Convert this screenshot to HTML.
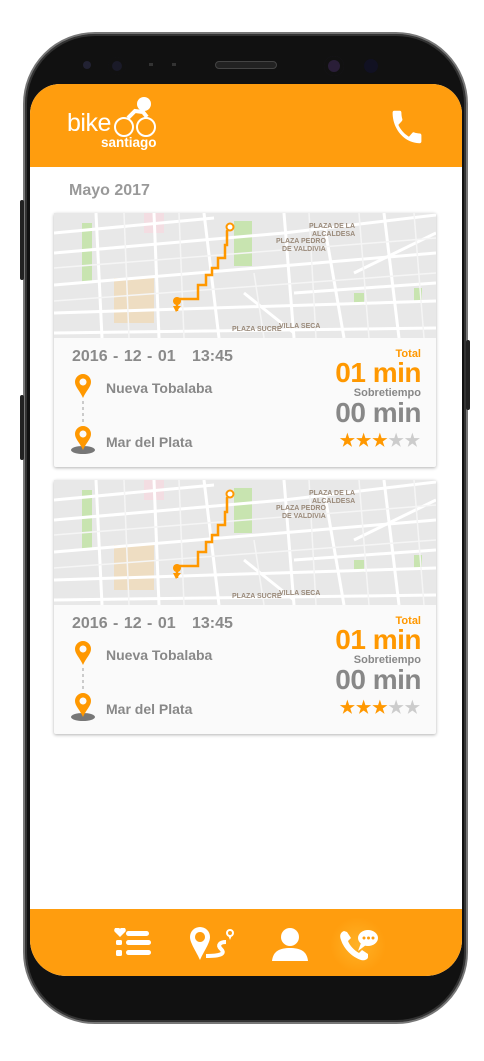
<!DOCTYPE html>
<html><head><meta charset="utf-8"><style>
*{margin:0;padding:0;box-sizing:border-box}
body{width:484px;height:1061px;background:#fff;position:relative;overflow:hidden;font-family:"Liberation Sans",sans-serif}
.phone{position:absolute;left:23px;top:32px;width:445px;height:992px;border-radius:72px;background:#111;border:2px solid #777;box-shadow:inset 0 0 0 2px #333}
.btn{position:absolute;background:#222;width:4px;border-radius:2px}
.screen{position:absolute;left:30px;top:84px;width:432px;height:892px;border-radius:30px 30px 36px 36px;overflow:hidden;background:#fff}
.hdr{height:83px;background:#ff9d0e;position:relative}
.foot{position:absolute;bottom:0;left:0;width:100%;height:67px;background:#ff9d0e}
.month{position:absolute;left:39px;top:98px;font-size:16px;font-weight:bold;color:#999}
.card{position:absolute;left:24px;width:382px;height:254px;background:#fafafa;box-shadow:0 1px 3px rgba(0,0,0,.3);border-radius:2px}
.map{width:382px;height:125px;display:block}
.date{position:absolute;left:18px;top:135px;font-size:16px;font-weight:bold;color:#8a8a8a;word-spacing:1px}
.st{position:absolute;left:52px;font-size:14px;font-weight:bold;color:#888}
.r{position:absolute;right:15px;text-align:right;font-weight:bold}
</style></head><body>
<div class="phone"></div>
<div class="btn" style="left:20px;top:200px;height:80px"></div>
<div class="btn" style="left:20px;top:395px;height:65px"></div>
<div class="btn" style="left:466px;top:340px;height:70px"></div>
<div style="position:absolute;left:83px;top:61px;width:8px;height:8px;border-radius:50%;background:#223"></div>
<div style="position:absolute;left:108px;top:57px;width:18px;height:18px;border-radius:50%;background:#1a1a28;box-shadow:inset 0 0 0 4px #111"></div>
<div style="position:absolute;left:149px;top:63px;width:4px;height:3px;background:#333"></div>
<div style="position:absolute;left:172px;top:63px;width:4px;height:3px;background:#333"></div>
<div style="position:absolute;left:215px;top:61px;width:62px;height:8px;border-radius:4px;background:#222;border:1px solid #444"></div>
<div style="position:absolute;left:324px;top:56px;width:20px;height:20px;border-radius:50%;background:#2a1e38;box-shadow:inset 0 0 0 4px #111"></div>
<div style="position:absolute;left:364px;top:59px;width:14px;height:14px;border-radius:50%;background:#112"></div>

<div class="screen">
 <div class="hdr">
  <div style="position:absolute;left:37px;top:25px;color:#fff;font-size:25px;letter-spacing:-0.5px">bike</div>
  <div style="position:absolute;left:71px;top:51px;color:#fff;font-size:13.5px;font-weight:bold">santiago</div>
  <svg style="position:absolute;left:83px;top:12px" width="45" height="45" viewBox="0 0 45 45" fill="none" stroke="#fff" stroke-width="2">
   <circle cx="31" cy="8" r="7" fill="#fff" stroke="none"/>
   <circle cx="11" cy="31" r="9"/><circle cx="33" cy="31" r="9"/>
   <path d="M15 22 L22 15 L30 16 L34 21" stroke-width="4"/>
  </svg>
  <svg style="position:absolute;left:361px;top:25px" width="32" height="36" viewBox="2 2 20 20" preserveAspectRatio="none"><path fill="#fff" d="M6.6 10.8c1.4 2.8 3.8 5.1 6.6 6.6l2.2-2.2c.3-.3.7-.4 1-.2 1.1.4 2.3.6 3.6.6.6 0 1 .4 1 1V20c0 .6-.4 1-1 1C10.6 21 3 13.4 3 4c0-.6.4-1 1-1h3.5c.6 0 1 .4 1 1 0 1.3.2 2.5.6 3.6.1.3 0 .7-.2 1z"/></svg>
 </div>
 <div class="month" style="top:98px">Mayo 2017</div>

 <div class="card" style="top:129px">
  <svg class="map" viewBox="0 0 382 125"><use href="#mp"/></svg>
  <div class="date">2016 - 12 - 01 &nbsp;&nbsp;13:45</div>
  <svg style="position:absolute;left:16px;top:161px" width="26" height="80" viewBox="0 0 26 80"><use href="#pins"/></svg>
  <div class="st" style="top:167px">Nueva Tobalaba</div>
  <div class="st" style="top:221px">Mar del Plata</div>
  <div class="r" style="top:135px;font-size:11px;color:#ff9800">Total</div>
  <div class="r" style="top:144px;font-size:28px;color:#ff9800;letter-spacing:-0.5px">01 min</div>
  <div class="r" style="top:174px;font-size:11px;color:#888">Sobretiempo</div>
  <div class="r" style="top:184px;font-size:28px;color:#888;letter-spacing:-0.5px">00 min</div>
  <div class="r" style="top:218px;font-size:17px;letter-spacing:1px"><span style="color:#ff9800">★★★</span><span style="color:#ccc">★★</span></div>
 </div>
 <div class="card" style="top:396px">
  <svg class="map" viewBox="0 0 382 125"><use href="#mp"/></svg>
  <div class="date">2016 - 12 - 01 &nbsp;&nbsp;13:45</div>
  <svg style="position:absolute;left:16px;top:161px" width="26" height="80" viewBox="0 0 26 80"><use href="#pins"/></svg>
  <div class="st" style="top:167px">Nueva Tobalaba</div>
  <div class="st" style="top:221px">Mar del Plata</div>
  <div class="r" style="top:135px;font-size:11px;color:#ff9800">Total</div>
  <div class="r" style="top:144px;font-size:28px;color:#ff9800;letter-spacing:-0.5px">01 min</div>
  <div class="r" style="top:174px;font-size:11px;color:#888">Sobretiempo</div>
  <div class="r" style="top:184px;font-size:28px;color:#888;letter-spacing:-0.5px">00 min</div>
  <div class="r" style="top:218px;font-size:17px;letter-spacing:1px"><span style="color:#ff9800">★★★</span><span style="color:#ccc">★★</span></div>
 </div>

 <div class="foot">
  <svg style="position:absolute;left:84px;top:19px" width="38" height="30" viewBox="0 0 38 30" fill="#fff">
   <path d="M6 9 L0.5 3.5 A3 3 0 0 1 6 1 A3 3 0 0 1 11.5 3.5Z"/>
   <rect x="2" y="12" width="6" height="5" rx="1.5"/><rect x="2" y="22" width="6" height="6" rx="1.5"/>
   <rect x="12" y="3" width="23" height="5" rx="2.5"/><rect x="12" y="12" width="25" height="5" rx="2.5"/><rect x="12" y="22" width="25" height="5" rx="2.5"/>
  </svg>
  <svg style="position:absolute;left:160px;top:18px" width="46" height="36" viewBox="0 0 46 36" fill="#fff">
   <path d="M10 0 A10 10 0 0 1 20 10 C20 16 14 24 10 33 C6 24 0 16 0 10 A10 10 0 0 1 10 0Z M10 5 A5 5 0 1 0 10.01 5Z" fill-rule="evenodd"/>
   <path d="M16 29 C30 29 36 27 31 22 C27 18 30 15 36 15" stroke="#fff" stroke-width="4" fill="none"/>
   <circle cx="40" cy="6" r="3" fill="none" stroke="#fff" stroke-width="2"/><path d="M38 8 L40 13 L42 8Z"/>
  </svg>
  <svg style="position:absolute;left:241px;top:18px" width="38" height="34" viewBox="0 0 38 34" fill="#fff">
   <circle cx="19" cy="10" r="9"/><path d="M1 34 C2 24 9 21 19 21 C29 21 36 24 37 34Z"/>
  </svg>
  <div style="position:absolute;left:300px;top:8px;width:56px;height:56px;border-radius:50%;background:radial-gradient(#ffb226,rgba(255,160,16,0) 70%)"></div>
  <svg style="position:absolute;left:309px;top:18px" width="40" height="36" viewBox="0 0 40 36" fill="#fff">
   <path d="M5 4 C2 5 0 8 2 13 C5 22 13 30 22 33 C26 34 29 32 29 30 L29 27 L23 23 L20 26 C15 23 11 19 9 14 L12 11 L8 5Z"/>
   <ellipse cx="29" cy="11" rx="10" ry="8"/><path d="M22 16 L19 24 L27 18Z"/>
   <circle cx="25" cy="11" r="1.5" fill="#ff9d0e"/><circle cx="29.5" cy="11" r="1.5" fill="#ff9d0e"/><circle cx="34" cy="11" r="1.5" fill="#ff9d0e"/>
  </svg>
 </div>
</div>

<svg width="0" height="0" style="position:absolute">
 <defs>
  <g id="pins">
   <path d="M13 0 A8 8 0 0 1 21 8 C21 13 16 17 13 24 C10 17 5 13 5 8 A8 8 0 0 1 13 0Z M13 4.5 A3.5 3.5 0 1 0 13.01 4.5Z" fill="#ff9800" fill-rule="evenodd"/>
   <path d="M13 27 V50" stroke="#bbb" stroke-width="1.5" stroke-dasharray="3 3"/>
   <ellipse cx="13" cy="76" rx="12" ry="4" fill="#777"/>
   <path d="M13 52 A8 8 0 0 1 21 60 C21 65 16 69 13 76 C10 69 5 65 5 60 A8 8 0 0 1 13 52Z M13 56.5 A3.5 3.5 0 1 0 13.01 56.5Z" fill="#ff9800" fill-rule="evenodd"/>
  </g>
  <g id="mp">
   <rect width="382" height="125" fill="#e8e8e8"/>
   <rect x="90" y="0" width="20" height="20" fill="#f3dde2"/>
   <rect x="60" y="65" width="40" height="45" fill="#efd9b8" opacity=".8"/>
   <rect x="180" y="8" width="18" height="45" fill="#c8e4b0"/>
   <rect x="28" y="10" width="10" height="60" fill="#c8e4b0"/>
   <rect x="360" y="75" width="8" height="15" fill="#c8e4b0"/>
   <rect x="300" y="80" width="10" height="12" fill="#c8e4b0"/>
   <g stroke="#fff" stroke-width="3" fill="none">
    <path d="M0 72 L382 40"/><path d="M0 40 L230 20 L382 2"/><path d="M0 100 L382 88"/><path d="M0 20 L160 5"/>
    <path d="M42 0 L48 125"/><path d="M100 0 L105 125"/><path d="M150 0 L165 125"/><path d="M230 0 L240 125"/>
    <path d="M270 10 L290 125"/><path d="M330 0 L345 125"/><path d="M190 80 L240 120"/><path d="M300 60 L382 20"/>
    <path d="M0 120 L382 115"/><path d="M240 80 L382 70"/>
   </g>
   <g stroke="#f5f5f5" stroke-width="1.5" fill="none">
    <path d="M0 55 L382 25"/><path d="M0 88 L382 60"/><path d="M70 0 L75 125"/><path d="M125 0 L130 125"/><path d="M200 60 L210 125"/><path d="M255 0 L262 125"/><path d="M305 0 L315 125"/><path d="M360 0 L370 125"/>
   </g>
   <g fill="#9a8a7a" font-size="7" font-weight="bold"><text x="222" y="30">PLAZA PEDRO</text><text x="228" y="38">DE VALDIVIA</text><text x="255" y="15">PLAZA DE LA</text><text x="258" y="23">ALCALDESA</text><text x="178" y="118">PLAZA SUCRE</text><text x="225" y="115">VILLA SECA</text></g>
   <path d="M123 98 V86 H144 V72 H152 V62 H158 V55 H164 V45 H171 V32 H173 V18 L176 15" stroke="#ff9800" stroke-width="2.5" fill="none"/>
   <path d="M123 92 a4 4 0 1 1 .01 0Z" fill="#ff9800"/><path d="M122 99 L119 93 L127 93Z" fill="#ff9800"/>
   <circle cx="176" cy="14" r="3.5" fill="#fff" stroke="#ff9800" stroke-width="2"/>
  </g>
 </defs>
</svg>
</body></html>
